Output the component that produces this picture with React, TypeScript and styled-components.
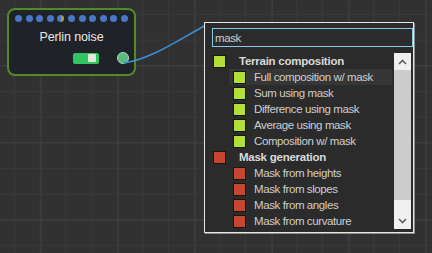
import React from 'react';
import styled, { createGlobalStyle } from 'styled-components';

const GlobalStyle = createGlobalStyle`
  html, body {
    margin: 0;
    padding: 0;
  }
  body {
    width: 432px;
    height: 253px;
    overflow: hidden;
    font-family: "Liberation Sans", Arial, sans-serif;
  }
`;

const Canvas = styled.div`
  position: relative;
  width: 432px;
  height: 253px;
  overflow: hidden;
  background-color: #313131;
  background-image:
    linear-gradient(to right, #3f3f3f 1px, transparent 1px),
    linear-gradient(to bottom, #3f3f3f 1px, transparent 1px),
    linear-gradient(to right, #393939 1px, transparent 1px),
    linear-gradient(to bottom, #393939 1px, transparent 1px);
  background-size: 77px 100%, 100% 77px, 25.67px 100%, 100% 25.67px;
  background-position: 40.7px 0, 0 65.3px, 14px 0, 0 14px;
`;

const Node = styled.div`
  position: absolute;
  left: 7px;
  top: 8px;
  width: 129px;
  height: 68px;
  box-sizing: border-box;
  border: 2px solid #4f8a2c;
  border-radius: 8px;
  background: #1f2227;
  display: flex;
  flex-direction: column;
  align-items: center;
  padding-top: 5px;
`;

const Dots = styled.div`
  display: flex;
  gap: 3.6px;
`;

const Dot = styled.span<{ $half?: boolean }>`
  width: 7px;
  height: 7px;
  border-radius: 50%;
  background: ${p => (p.$half ? 'linear-gradient(to right, #4a78c8 50%, #b59a55 50%)' : '#4a78c8')};
`;

const Title = styled.div`
  margin-top: 8px;
  font-size: 12.5px;
  letter-spacing: -0.1px;
  color: #e8e8e8;
  line-height: 15px;
`;

const NodeFooter = styled.div`
  align-self: stretch;
  display: flex;
  justify-content: flex-end;
  align-items: center;
  gap: 18px;
  padding-right: 5px;
  margin-top: 7px;
`;

const Toggle = styled.div`
  width: 26px;
  height: 11px;
  border-radius: 2px;
  background: #33c462;
  display: flex;
  justify-content: flex-end;
  align-items: center;
  padding-right: 3px;
  box-sizing: border-box;
`;

const Knob = styled.span`
  width: 8px;
  height: 8px;
  border-radius: 1px;
  background: #e6e6dc;
`;

const Port = styled.span`
  width: 12px;
  height: 12px;
  box-sizing: border-box;
  border-radius: 50%;
  border: 1.5px solid #a9dcb9;
  background: #5db982;
`;

const Wire = styled.svg`
  position: absolute;
  left: 0;
  top: 0;
  pointer-events: none;
`;

const Popup = styled.div`
  position: absolute;
  left: 204px;
  top: 22px;
  width: 210px;
  height: 211px;
  box-sizing: border-box;
  border: 1px solid #e6e6e6;
  box-shadow: 1px 1px 0 #8c8c8c;
  background: #2b2b2b;
  padding: 5px 0 3px 7px;
  display: flex;
  flex-direction: column;
  gap: 6px;
`;

const SearchInput = styled.input`
  height: 19px;
  box-sizing: border-box;
  border: 1px solid #84c8ea;
  background: #2b2b2b;
  color: #cfcfcf;
  font-family: "Liberation Sans", Arial, sans-serif;
  font-size: 11.5px;
  letter-spacing: -0.4px;
  padding: 0 2px;
  outline: none;
`;

const ListArea = styled.div`
  flex: 1;
  display: flex;
  margin-left: -7px;
  padding-right: 2px;
`;

const List = styled.div`
  flex: 1;
  display: flex;
  flex-direction: column;
`;

const Row = styled.div<{ $sub?: boolean; $hover?: boolean }>`
  height: 16px;
  display: flex;
  align-items: center;
  padding-left: ${p => (p.$sub ? '28px' : '8px')};
  gap: ${p => (p.$sub ? '8px' : '13px')};
  background: ${p => (p.$hover ? 'linear-gradient(to right, transparent 24px, #363636 24px)' : 'transparent')};
  margin-right: 2px;
  font-size: 11.5px;
  white-space: nowrap;
  color: ${p => (p.$sub ? '#cfcfcf' : '#dadada')};
  font-weight: ${p => (p.$sub ? 400 : 700)};
  letter-spacing: ${p => (p.$sub ? '-0.4px' : '-0.25px')};
`;

const Swatch = styled.span<{ $color: string }>`
  width: 13px;
  height: 13px;
  box-sizing: border-box;
  border: 1px solid #161616;
  background: ${p => p.$color};
  flex-shrink: 0;
`;

const Scrollbar = styled.div`
  width: 17px;
  display: flex;
  flex-direction: column;
  background: #f0f0f0;
`;

const ScrollButton = styled.div`
  height: 17px;
  display: flex;
  align-items: center;
  justify-content: center;
`;

const Thumb = styled.div`
  height: 130px;
  background: #cdcdcd;
`;

const Track = styled.div`
  flex: 1;
`;

const Chevron = ({ up }: { up?: boolean }) => (
  <svg width="9" height="6" viewBox="0 0 9 6">
    <path
      d={up ? 'M1 5 L4.5 1.5 L8 5' : 'M1 1 L4.5 4.5 L8 1'}
      fill="none"
      stroke="#606060"
      strokeWidth="1.6"
    />
  </svg>
);

const GREEN = '#b3de3a';
const RED = '#c7452e';

const items = [
  { label: 'Terrain composition', color: GREEN },
  { label: 'Full composition w/ mask', color: GREEN, sub: true, hover: true },
  { label: 'Sum using mask', color: GREEN, sub: true },
  { label: 'Difference using mask', color: GREEN, sub: true },
  { label: 'Average using mask', color: GREEN, sub: true },
  { label: 'Composition w/ mask', color: GREEN, sub: true },
  { label: 'Mask generation', color: RED },
  { label: 'Mask from heights', color: RED, sub: true },
  { label: 'Mask from slopes', color: RED, sub: true },
  { label: 'Mask from angles', color: RED, sub: true },
  { label: 'Mask from curvature', color: RED, sub: true },
];

export default function App() {
  return (
    <Canvas>
      <GlobalStyle />
      <Node>
        <Dots>
          {Array.from({ length: 11 }).map((_, i) => (
            <Dot key={i} $half={i === 4} />
          ))}
        </Dots>
        <Title>Perlin noise</Title>
        <NodeFooter>
          <Toggle>
            <Knob />
          </Toggle>
          <Port />
        </NodeFooter>
      </Node>
      <Wire width="432" height="253">
        <path d="M123 63 C150 60, 178 40, 208 24" fill="none" stroke="#3d8fd6" strokeWidth="1.6" />
      </Wire>
      <Popup>
        <SearchInput defaultValue="mask" />
        <ListArea>
          <List>
            {items.map(it => (
              <Row key={it.label} $sub={it.sub} $hover={it.hover}>
                <Swatch $color={it.color} />
                {it.label}
              </Row>
            ))}
          </List>
          <Scrollbar>
            <ScrollButton>
              <Chevron up />
            </ScrollButton>
            <Thumb />
            <Track />
            <ScrollButton>
              <Chevron />
            </ScrollButton>
          </Scrollbar>
        </ListArea>
      </Popup>
    </Canvas>
  );
}
